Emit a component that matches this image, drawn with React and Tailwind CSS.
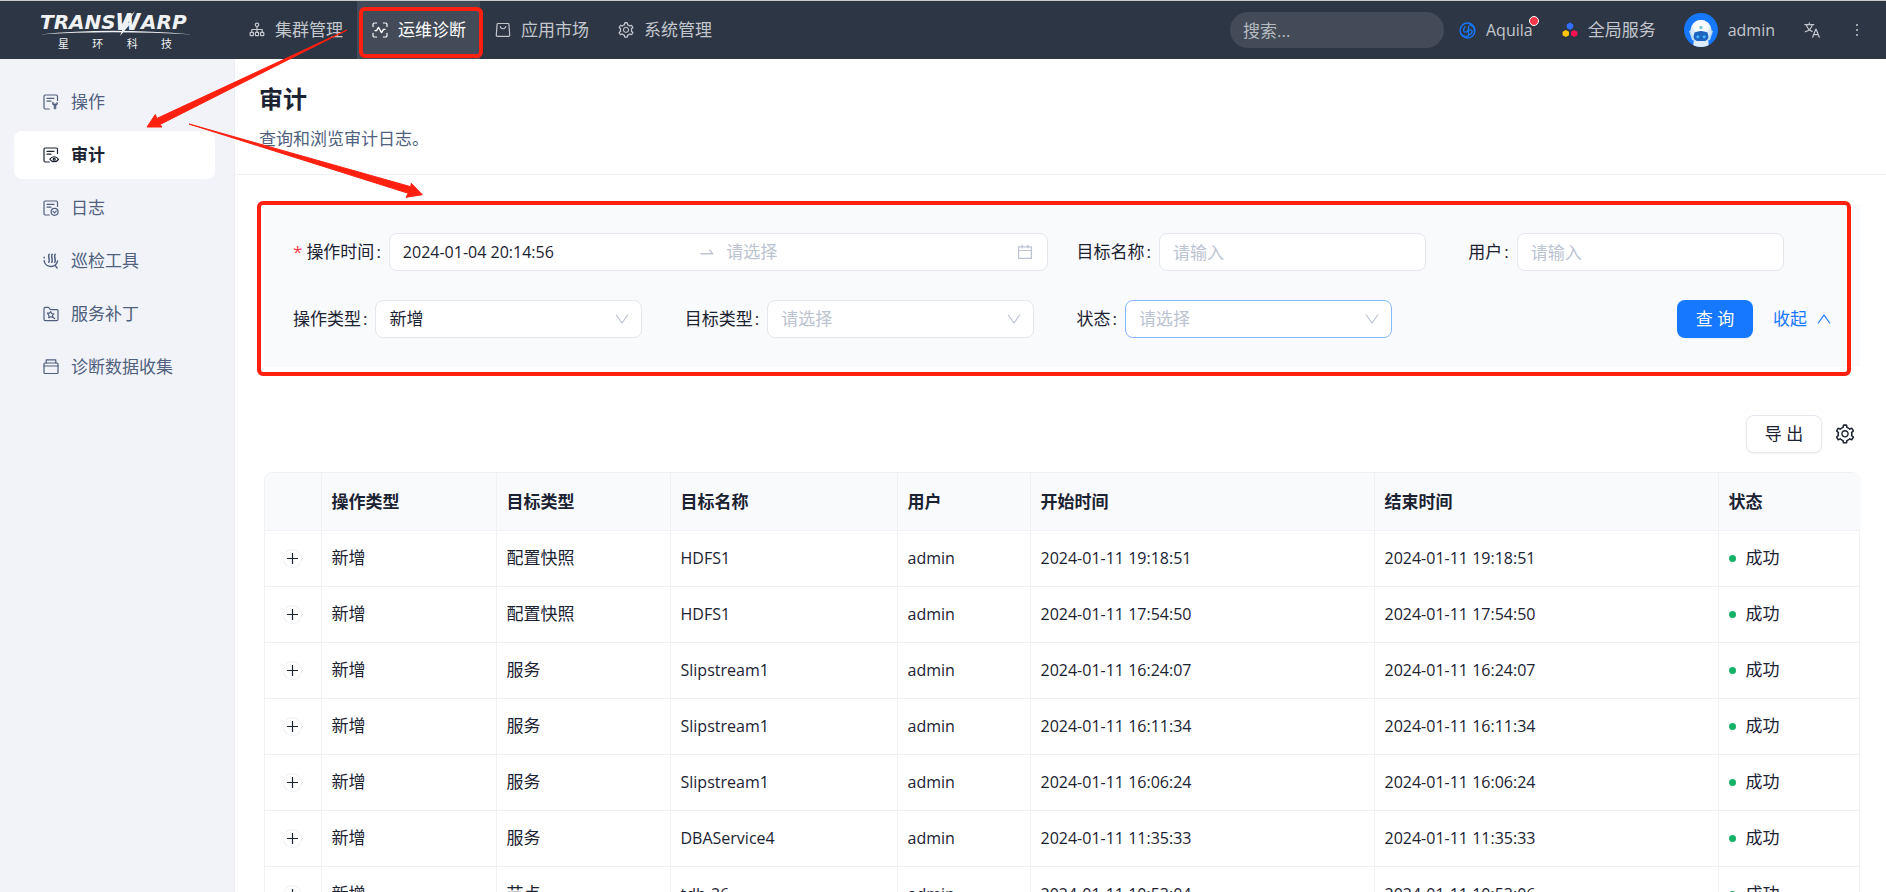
import { AiOutlineCalendar, AiOutlineSetting, AiOutlineSwapRight } from 'react-icons/ai'

const rows = [
  { type: '新增', targetType: '配置快照', target: 'HDFS1', user: 'admin', start: '2024-01-11 19:18:51', end: '2024-01-11 19:18:51' },
  { type: '新增', targetType: '配置快照', target: 'HDFS1', user: 'admin', start: '2024-01-11 17:54:50', end: '2024-01-11 17:54:50' },
  { type: '新增', targetType: '服务', target: 'Slipstream1', user: 'admin', start: '2024-01-11 16:24:07', end: '2024-01-11 16:24:07' },
  { type: '新增', targetType: '服务', target: 'Slipstream1', user: 'admin', start: '2024-01-11 16:11:34', end: '2024-01-11 16:11:34' },
  { type: '新增', targetType: '服务', target: 'Slipstream1', user: 'admin', start: '2024-01-11 16:06:24', end: '2024-01-11 16:06:24' },
  { type: '新增', targetType: '服务', target: 'DBAService4', user: 'admin', start: '2024-01-11 11:35:33', end: '2024-01-11 11:35:33' },
  { type: '新增', targetType: '节点', target: 'tdh-26', user: 'admin', start: '2024-01-11 10:53:04', end: '2024-01-11 10:53:06' },
]

const columns = [
  { title: '操作类型', width: 'w-[175px]' },
  { title: '目标类型', width: 'w-[174px]' },
  { title: '目标名称', width: 'w-[227px]' },
  { title: '用户', width: 'w-[133px]' },
  { title: '开始时间', width: 'w-[344px]' },
  { title: '结束时间', width: 'w-[344px]' },
  { title: '状态', width: 'w-[143px]' },
]

function Svg({ children, className = 'size-4', box = '0 0 16 16' }) {
  return (
    <svg viewBox={box} className={`shrink-0 ${className}`} fill="none" stroke="currentColor" strokeWidth="1.2" strokeLinecap="round" strokeLinejoin="round" aria-hidden="true">
      {children}
    </svg>
  )
}

const ClusterIcon = () => (
  <Svg>
    <circle cx="8" cy="2.8" r="1.7" />
    <path d="M8 4.5v5.300M2.800 10V7.500h10.400V10" />
    <rect x="1.2" y="10.4" width="3.2" height="3.2" rx=".6" />
    <rect x="6.4" y="10.4" width="3.2" height="3.2" rx=".6" />
    <rect x="11.6" y="10.4" width="3.2" height="3.2" rx=".6" />
  </Svg>
)

const DiagnoseIcon = () => (
  <Svg>
    <path d="M1 4.6v-2Q1 1 2.600 1h2M11.400 1h2Q15 1 15 2.600v2M15 11.400v2q0 1.600-1.600 1.600h-2M4.600 15h-2Q1 15 1 13.400v-2" />
    <path d="M3 8.600h1.500l2-3.200 3 5.200 2-3.200H13" strokeWidth="1.4" />
  </Svg>
)

const MarketIcon = () => (
  <Svg>
    <path d="M2.800 1.500h10.400q.6 0 .7.6l.8 11.200q0 1.100-1.100 1.100H2.400q-1.100 0-1.100-1.100L2.100 2.100q.1-.6.7-.6z" />
    <path d="M5.300 4.500c.5 3 4.900 3 5.400 0" />
  </Svg>
)

const DocBase = () => (
  <>
    <path d="M6.300 15H2.200Q1 15 1 13.800V2.200Q1 1 2.200 1h11.100q1.200 0 1.200 1.200v4.300" />
    <path d="M4 4.300h7M4 7.200h4" />
  </>
)

const OperateIcon = () => (
  <Svg>
    <DocBase />
    <path d="M10 8.300a2.200 2.200 0 0 0 1.200 3.200v3.300h1.600v-3.300A2.200 2.200 0 0 0 14 8.300v1.600h-4z" fill="currentColor" strokeWidth=".8" />
  </Svg>
)

const AuditIcon = () => (
  <Svg>
    <DocBase />
    <path d="M6.800 12.300c2-3.400 6.700-3.400 8.700 0-2 3.200-6.700 3.200-8.700 0z" />
    <circle cx="11.200" cy="12.200" r="1" />
  </Svg>
)

const LogIcon = () => (
  <Svg>
    <DocBase />
    <circle cx="11.600" cy="11.800" r="3.500" />
    <path d="M10 11.300l1.600 1.600 1.700-1.800" />
  </Svg>
)

const InspectIcon = () => (
  <Svg>
    <path d="M6.200 1.300C4.300 3.700 7.600 6.400 5.700 9.300M9.200 1.300C7.300 3.700 10.600 6.400 8.700 9.300M12.200 1.300c-1.900 2.400 1.400 5.100-.5 8" strokeWidth="1.5" />
    <path d="M1.200 7.600c.5 7.300 11.500 8.200 13.400.3M12.200 12.600l2 2.400M1.200 4.300v.6" strokeWidth="1.4" />
  </Svg>
)

const PatchIcon = () => (
  <Svg>
    <path d="M1 13.300V2.700q0-1.400 1.200-1.400h3.300l2 2.300h6.300q1.200 0 1.200 1.200v8.500q0 1.300-1.200 1.300H2.200Q1 14.600 1 13.300z" />
    <path d="M4.300 7l2.200.1 1.200-1.500.9 1.900 2.300.3-1.500 1.600.6 2.100-2.200-.8-2 1.100.1-2.300zM9.700 10.900l2 1.800" />
  </Svg>
)

const CollectIcon = () => (
  <Svg>
    <path d="M3.200 4V.9h9.600V4M1 7h14" />
    <rect x="1" y="4" width="14" height="10.500" rx="1" />
  </Svg>
)

const ChevronDown = ({ className = '' }) => (
  <Svg className={`w-[14px] h-[10px] ${className}`} box="0 0 14 10">
    <path d="M1.300 1l5.700 8 5.700-8" />
  </Svg>
)

const AquilaIcon = () => (
  <Svg className="size-[17px] text-[#1677ff]">
    <circle cx="8" cy="8" r="7" strokeWidth="1.3" />
    <path d="M5.600 4.500C3.800 6.800 3.800 9.300 6 9.600c2.200.2 3-2.400 3.200-5.600M8.900 5v7.600M9 7.500c4-.8 4.600 3 .8 4.300M10 2.700c3 .6 4.700 3 4.300 5.800M3 12c2 1.600 4.500 2 6.500.7" strokeWidth="1.2" />
  </Svg>
)

const ServicesIcon = () => (
  <svg viewBox="0 0 16 16" className="size-4 shrink-0" aria-hidden="true">
    <path d="M8 .6l3.200 1.800v3.500L8 7.700 4.800 5.900V2.400z" fill="#3370ff" />
    <path d="M3.800 8L7 9.800v3.500l-3.200 1.800-3.200-1.800V9.800z" fill="#ffc60a" />
    <path d="M12.200 8l3.200 1.800v3.500l-3.200 1.800L9 13.300V9.800z" fill="#ff1150" />
  </svg>
)

const Avatar = () => (
  <svg viewBox="0 0 34 34" className="size-[34px] shrink-0" aria-hidden="true">
    <defs>
      <clipPath id="face"><circle cx="17" cy="17" r="17" /></clipPath>
    </defs>
    <g clipPath="url(#face)">
      <rect width="34" height="34" fill="#1677ff" />
      <path d="M9 34l1-8h14l1 8z" fill="#dcecfa" />
      <path d="M5 18l3 9 3 1V16zM29 18l-3 9-3 1V16z" fill="#b9d8f4" />
      <ellipse cx="17" cy="17" rx="10.500" ry="10" fill="#d9eaf8" />
      <ellipse cx="17" cy="13.500" rx="8.500" ry="6.500" fill="#f7fbff" />
      <path d="M10.500 19.500q6.500-3 13 0 2.500 7-2.500 8.500h-8q-5-1.500-2.500-8.500z" fill="#1c64c0" />
      <circle cx="13.800" cy="23.800" r="1.500" fill="#41b8ff" />
      <circle cx="20.200" cy="23.800" r="1.500" fill="#41b8ff" />
      <circle cx="17" cy="14.500" r="1.700" fill="#7cc5dc" />
    </g>
  </svg>
)

const TranslateIcon = () => (
  <Svg>
    <path d="M.8 2.600h9M5.300.8v1.800M8.200 2.800C7.600 6 4.800 8.600 1.200 9.800M2.400 2.800c.8 3 3 5.400 5.600 6.600" />
    <path d="M8.600 15.200l3.200-8h.3l3.200 8M9.700 12.600h4.500" />
  </Svg>
)

const Logo = () => (
  <a href="#" className="flex w-[234px] flex-col pl-10 text-[#f0f1f2]" aria-label="TRANSWARP">
    <svg viewBox="0 0 152 28" className="h-7 w-[152px]" fill="currentColor" fontFamily="DejaVu Sans" fontWeight="700" fontStyle="italic">
      <text x="0" y="19" fontSize="20">TRANS</text>
      <text x="75" y="20" fontSize="23">W</text>
      <text x="101" y="19" fontSize="20">ARP</text>
      <path d="M95 1l-7 12 4-1-12 14 4-11-4 1z" />
      <path d="M0 24.500Q70 17 152 24.500 70 20 0 24.500z" />
    </svg>
    <span className="ml-[18px] flex w-[114px] justify-between text-[11px] leading-3">
      <span>星</span>
      <span>环</span>
      <span>科</span>
      <span>技</span>
    </span>
  </a>
)

const navItems = [
  { label: '集群管理', icon: <ClusterIcon /> },
  { label: '运维诊断', icon: <DiagnoseIcon />, active: true },
  { label: '应用市场', icon: <MarketIcon /> },
  { label: '系统管理', icon: <AiOutlineSetting className="-mx-px size-[18px] shrink-0" /> },
]

const menuItems = [
  { label: '操作', icon: <OperateIcon /> },
  { label: '审计', icon: <AuditIcon />, active: true },
  { label: '日志', icon: <LogIcon /> },
  { label: '巡检工具', icon: <InspectIcon /> },
  { label: '服务补丁', icon: <PatchIcon /> },
  { label: '诊断数据收集', icon: <CollectIcon /> },
]

function Header() {
  return (
    <header className="flex h-[59px] shrink-0 items-center border-t border-[#c9cbca] bg-[#2d3645] text-[#c3c7cd]">
      <Logo />
      <nav className="flex self-stretch text-[17px]">
        {navItems.map((item) => (
          <a key={item.label} href="#" className={`relative flex items-center gap-[10px] whitespace-nowrap pl-[15px] pr-[14px] ${item.active ? 'bg-[#444b58] text-white' : ''}`}>
            {item.icon}
            {item.label}
            {item.active && <span className="pointer-events-none absolute -right-[3px] bottom-px left-[2px] top-[6px] rounded-md border-4 border-[#ff2010]" />}
          </a>
        ))}
      </nav>
      <div className="ml-auto flex items-center pr-7 text-base">
        <input type="search" aria-label="搜索" placeholder="搜索..." className="h-9 w-[214px] rounded-full bg-[#444b58] px-[13px] text-[17px] placeholder:text-[#b6bac1]" />
        <a href="#" className="ml-[15px] flex items-center gap-[10px]">
          <AquilaIcon />
          <span className="relative">
            Aquila
            <span className="absolute -right-[6px] top-[-2px] size-[10px] rounded-full border border-white bg-[#f5384b]" />
          </span>
        </a>
        <a href="#" className="ml-[29px] flex items-center gap-[10px] text-[17px]">
          <ServicesIcon />
          全局服务
        </a>
        <a href="#" className="ml-7 flex items-center gap-[10px]">
          <Avatar />
          admin
        </a>
        <button type="button" aria-label="语言" className="ml-[29px]"><TranslateIcon /></button>
        <button type="button" aria-label="更多" className="ml-[35px] flex w-[3px] flex-col items-center gap-[3px]">
          <span className="size-[2px] rounded-full bg-current" />
          <span className="size-[2px] rounded-full bg-current" />
          <span className="size-[2px] rounded-full bg-current" />
        </button>
      </div>
    </header>
  )
}

function Sidebar() {
  return (
    <aside className="w-[235px] shrink-0 border-r border-[#eceef2] bg-[#f2f3f9] px-[14px] pt-[19px]">
      <nav className="mr-[5px] flex flex-col gap-[5px]">
        {menuItems.map((item) => (
          <a key={item.label} href="#" className={`flex h-12 items-center gap-3 rounded-lg pl-[29px] text-[17px] ${item.active ? 'bg-white font-bold text-[#1b2232]' : 'text-[#4f5f7d]'}`}>
            {item.icon}
            {item.label}
          </a>
        ))}
      </nav>
    </aside>
  )
}

function Field({ id, label, required, className = '', children }) {
  return (
    <div className={`flex items-center ${className}`}>
      <label htmlFor={id} className="mr-2 flex shrink-0 items-center">
        {required && <span className="mr-1 text-[#f5384b]">*</span>}
        {label}
        <span className="ml-[2px]">:</span>
      </label>
      {children}
    </div>
  )
}

function TextField({ id, label }) {
  return (
    <Field id={id} label={label}>
      <input id={id} type="text" placeholder="请输入" className="h-[38px] w-[267px] min-w-0 rounded-lg border border-[#e5e7ee] bg-white px-[13px] placeholder:text-[#bcc3d2]" />
    </Field>
  )
}

function SelectField({ id, label, value, focused }) {
  return (
    <Field id={id} label={label}>
      <div className="relative w-[267px] min-w-0">
        <select id={id} defaultValue={value || ''} className={`h-[38px] w-full appearance-none rounded-lg border bg-white px-[13px] ${focused ? 'border-[#85b8fb]' : 'border-[#e5e7ee]'} ${value ? '' : 'text-[#bcc3d2]'}`}>
          <option value="">请选择</option>
          {value && <option>{value}</option>}
        </select>
        <ChevronDown className="pointer-events-none absolute right-[13px] top-[14px] text-[#bcc3d2]" />
      </div>
    </Field>
  )
}

function FilterPanel() {
  return (
    <form className="relative mt-[29px] grid grid-cols-4 gap-y-[29px] bg-[#f9fafc] py-[29px] pl-[29px] text-[17px]">
      <Field id="time" label="操作时间" required className="col-span-2 pr-[29px]">
        <div className="flex h-[38px] min-w-0 flex-1 items-center rounded-lg border border-[#e5e7ee] bg-white px-[13px] text-[#bcc3d2]">
          <input id="time" type="text" defaultValue="2024-01-04 20:14:56" className="min-w-0 flex-1 text-base text-[#1b2232]" />
          <AiOutlineSwapRight className="mx-[10px] size-[18px] shrink-0" />
          <input type="text" aria-label="结束" placeholder="请选择" className="min-w-0 flex-1 placeholder:text-[#bcc3d2]" />
          <AiOutlineCalendar className="ml-1 size-[18px] shrink-0" />
        </div>
      </Field>
      <TextField id="target" label="目标名称" />
      <TextField id="user" label="用户" />
      <SelectField id="type" label="操作类型" value="新增" />
      <SelectField id="targetType" label="目标类型" />
      <SelectField id="status" label="状态" focused />
      <div className="flex items-center justify-end pr-[29px]">
        <button type="button" className="h-[38px] w-[76px] rounded-lg bg-[#1677ff] text-white shadow-xs">查 询</button>
        <button type="button" className="ml-5 flex items-center gap-[10px] text-[#1677ff]">
          收起
          <ChevronDown className="rotate-180" />
        </button>
      </div>
      <span className="pointer-events-none absolute -bottom-[9px] -left-[7px] -top-[3px] right-[9px] rounded-md border-4 border-[#ff2010]" />
    </form>
  )
}

function AuditTable() {
  return (
    <div className="mt-[19px] rounded-t-lg border border-[#f0f1f5]">
      <table className="w-full table-fixed text-left">
        <thead className="text-[17px]">
          <tr className="h-[57px] bg-[#f9fafc]">
            <th className="w-14 rounded-tl-lg border-b border-[#f0f1f5]" aria-label="展开" />
            {columns.map((col) => (
              <th key={col.title} className={`border-b border-l border-[#f0f1f5] px-[10px] last:rounded-tr-lg ${col.width}`}>{col.title}</th>
            ))}
          </tr>
        </thead>
        <tbody>
          {rows.map((row) => (
            <tr key={row.start} className="h-14 *:border-b *:border-l *:border-[#f0f1f5] *:px-[10px]">
              <td className="border-l-0!">
                <button type="button" aria-label="展开行" className="mx-auto flex size-[19px] items-center justify-center rounded-full border border-[#eff0f4]">
                  <Svg className="size-[11px]" box="0 0 11 11"><path d="M5.500 0v11M0 5.500h11" /></Svg>
                </button>
              </td>
              <td className="text-[17px]">{row.type}</td>
              <td className="text-[17px]">{row.targetType}</td>
              <td>{row.target}</td>
              <td>{row.user}</td>
              <td>{row.start}</td>
              <td>{row.end}</td>
              <td className="text-[17px]">
                <span className="flex items-center gap-[10px]">
                  <span className="size-[7px] rounded-full bg-[#17b26a]" />
                  成功
                </span>
              </td>
            </tr>
          ))}
        </tbody>
      </table>
    </div>
  )
}

// red guide arrows laid over the page
function Arrows() {
  return (
    <svg className="pointer-events-none absolute left-0 top-0" width="430" height="200" fill="#ff2010" aria-hidden="true">
      <path d="M347 30L160 124.500l2 2.500-15 0 8.300-12.500 1.500 4z" stroke="#ff2010" strokeLinejoin="round" />
      <path d="M189 124l221.700 62.700.6-3.400 11 11.400-16.300 2.600 2.300-4z" stroke="#ff2010" strokeLinejoin="round" />
    </svg>
  )
}

export default function App() {
  return (
    <div className="relative flex h-screen flex-col overflow-hidden bg-white font-['Open_Sans','Noto_Sans_CJK_SC',sans-serif] text-base text-[#1b2232]">
      <Header />
      <div className="flex min-h-0 flex-1">
        <Sidebar />
        <main className="min-w-0 flex-1 overflow-y-auto [scrollbar-width:none]">
          <div className="border-b border-[#f0f1f4] px-6 pb-[23px] pt-6">
            <h1 className="text-2xl font-bold">审计</h1>
            <p className="mt-3 text-[17px] leading-6 text-[#4f5f7d]">查询和浏览审计日志。</p>
          </div>
          <div className="pl-[29px] pr-[26px]">
            <FilterPanel />
            <div className="mt-12 flex items-center justify-end gap-3 pr-1">
              <button type="button" className="h-[38px] w-[76px] rounded-lg border border-[#e5e7ee] bg-white text-[17px] shadow-xs">导 出</button>
              <button type="button" aria-label="列设置"><AiOutlineSetting className="size-[22px]" /></button>
            </div>
            <AuditTable />
          </div>
        </main>
      </div>
      <Arrows />
    </div>
  )
}
